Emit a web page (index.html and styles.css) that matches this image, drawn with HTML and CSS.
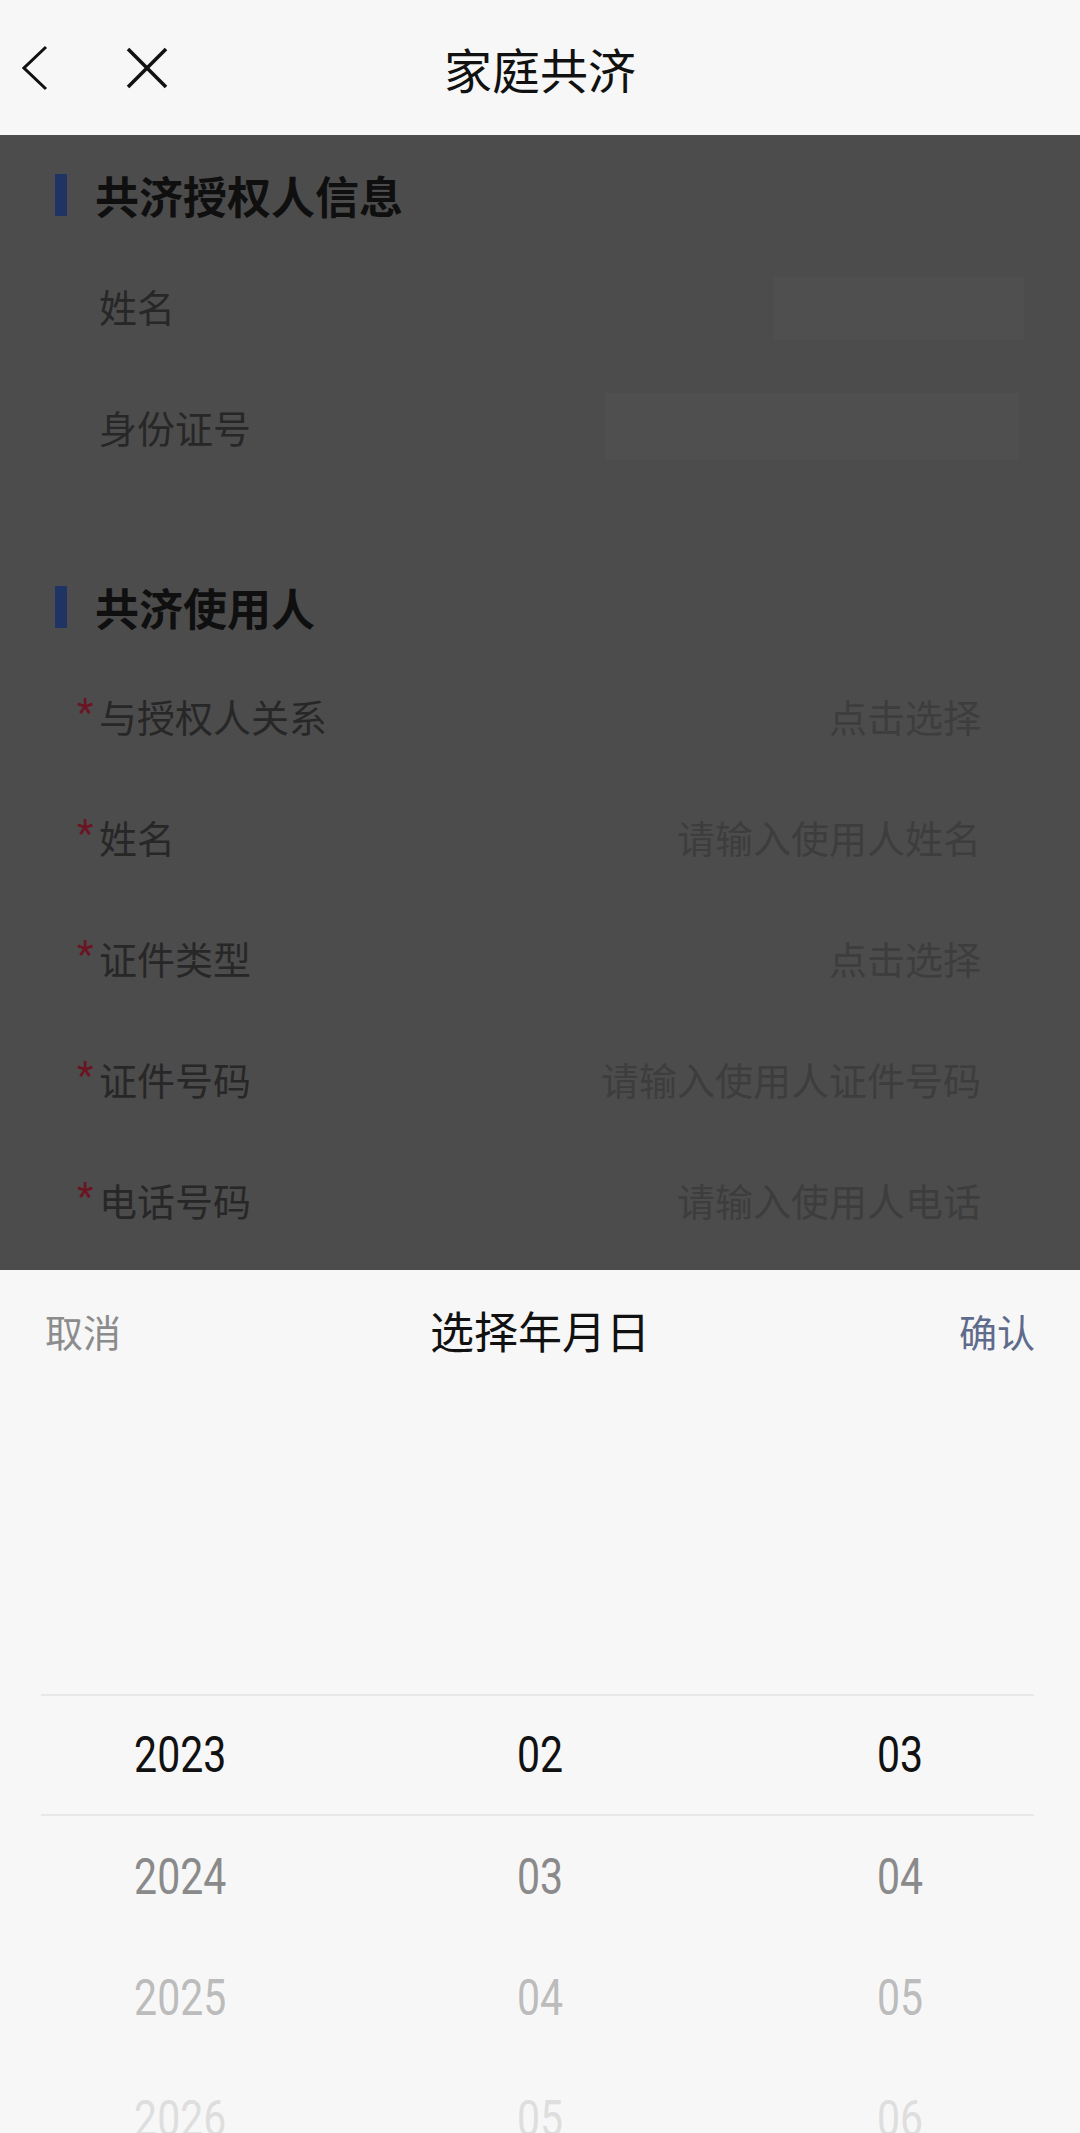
FILE: index.html
```html
<!DOCTYPE html>
<html>
<head>
    <meta charset="utf-8">
    <title>家庭共济</title>
    <link rel="stylesheet" href="styles.css">
</head>
<body>
    <div class="page">
        <div class="top-bar">
            <div class="top-actions">
                <svg class="icon-back" width="26" height="46" viewBox="0 0 26 46">
                    <polyline points="24,2 2,23 24,44" fill="none" stroke="#111" stroke-width="3" stroke-linejoin="miter"/>
                </svg>
                <svg class="icon-close" width="42" height="42" viewBox="0 0 42 42">
                    <line x1="2" y1="2" x2="40" y2="40" stroke="#111" stroke-width="3.5"/>
                    <line x1="40" y1="2" x2="2" y2="40" stroke="#111" stroke-width="3.5"/>
                </svg>
            </div>
            <div class="top-title">家庭共济</div>
            <div></div>
        </div>

        <div class="form-area">
            <div class="section first">
                <div class="section-title"><span class="bar"></span>共济授权人信息</div>
                <div class="row">
                    <span class="req"></span>
                    <span class="label">姓名</span>
                    <span class="masked name-mask"></span>
                </div>
                <div class="row">
                    <span class="req"></span>
                    <span class="label">身份证号</span>
                    <span class="masked id-mask"></span>
                </div>
            </div>

            <div class="section">
                <div class="section-title"><span class="bar"></span>共济使用人</div>
                <div class="row">
                    <span class="req">*</span>
                    <span class="label">与授权人关系</span>
                    <span class="value">点击选择</span>
                </div>
                <div class="row">
                    <span class="req">*</span>
                    <span class="label">姓名</span>
                    <span class="value">请输入使用人姓名</span>
                </div>
                <div class="row">
                    <span class="req">*</span>
                    <span class="label">证件类型</span>
                    <span class="value">点击选择</span>
                </div>
                <div class="row">
                    <span class="req">*</span>
                    <span class="label">证件号码</span>
                    <span class="value">请输入使用人证件号码</span>
                </div>
                <div class="row">
                    <span class="req">*</span>
                    <span class="label">电话号码</span>
                    <span class="value">请输入使用人电话</span>
                </div>
            </div>
        </div>

        <div class="picker">
            <div class="picker-head">
                <span class="cancel">取消</span>
                <span class="picker-title">选择年月日</span>
                <span class="confirm">确认</span>
            </div>
            <div class="wheel">
                <div class="wheel-line"></div>
                <div class="wheel-row current">
                    <span><i>2023</i></span><span><i>02</i></span><span><i>03</i></span>
                </div>
                <div class="wheel-line"></div>
                <div class="wheel-row near">
                    <span><i>2024</i></span><span><i>03</i></span><span><i>04</i></span>
                </div>
                <div class="wheel-row far">
                    <span><i>2025</i></span><span><i>04</i></span><span><i>05</i></span>
                </div>
                <div class="wheel-row farthest">
                    <span><i>2026</i></span><span><i>05</i></span><span><i>06</i></span>
                </div>
            </div>
        </div>
    </div>
</body>
</html>
```

FILE: styles.css
```css
body {
    margin: 0;
    background-color: #f7f7f7;
    font-family: Roboto, "Noto Sans CJK SC", sans-serif;
}

.page {
    width: 1080px;
    height: 2133px;
    overflow: hidden;
    display: flex;
    flex-direction: column;
}

/* top bar */
.top-bar {
    height: 135px;
    flex-shrink: 0;
    display: grid;
    grid-template-columns: 1fr auto 1fr;
    align-items: center;
    background-color: #f7f7f7;
}

.top-actions {
    display: flex;
    align-items: center;
    padding-left: 22px;
}

.icon-back {
    margin-right: 78px;
}

.top-title {
    font-size: 48px;
    color: #111;
}

/* dimmed form behind the picker */
.form-area {
    height: 1135px;
    flex-shrink: 0;
    background-color: #4c4c4c;
}

.section {
    margin-top: 88px;
}

.section.first {
    margin-top: 28px;
}

.section.first .section-title {
    margin-bottom: 18px;
}

.section-title {
    height: 64px;
    margin-bottom: 16px;
    display: flex;
    align-items: center;
    padding-left: 55px;
    font-size: 44px;
    font-weight: bold;
    color: #0f0f0f;
}

.bar {
    width: 12px;
    height: 42px;
    background-color: #1f3465;
    margin-right: 28px;
}

.row {
    height: 121px;
    display: flex;
    align-items: center;
    padding-left: 77px;
    padding-right: 56px;
    font-size: 38px;
}

.req {
    width: 22px;
    color: #6b1422;
    font-size: 38px;
    margin-top: -6px;
}

.label {
    color: #272727;
    flex: 1;
}

.value {
    color: #3d3d3d;
    padding-right: 43px;
}

.masked {
    background-color: #4f4f4f;
}

.name-mask {
    width: 250px;
    height: 63px;
    margin-top: 6px;
}

.id-mask {
    width: 414px;
    height: 67px;
    margin-right: 5px;
}

/* date picker */
.picker {
    flex: 1;
    background-color: #f7f7f7;
}

.picker-head {
    height: 120px;
    display: flex;
    align-items: center;
    justify-content: space-between;
    padding: 0 45px;
}

.cancel {
    font-size: 38px;
    color: #8c8c8c;
}

.picker-title {
    font-size: 44px;
    color: #111;
}

.confirm {
    font-size: 38px;
    color: #5f6b8c;
}

.wheel {
    padding-top: 304px;
}

.wheel-line {
    height: 2px;
    margin: 0 46px 0 41px;
    background-color: #e8e8e8;
}

.wheel-row {
    height: 121px;
    display: grid;
    grid-template-columns: 1fr 1fr 1fr;
    align-items: center;
    text-align: center;
}

.wheel-row.current {
    height: 118px;
    color: #111;
}

.wheel-row i {
    display: inline-block;
    font-style: normal;
    font-size: 50px;
    transform: scaleX(0.82);
}

.wheel-row.near {
    color: #8a8a8a;
}

.wheel-row.far {
    color: #bcbcbc;
}

.wheel-row.farthest {
    color: #dedede;
}
```
